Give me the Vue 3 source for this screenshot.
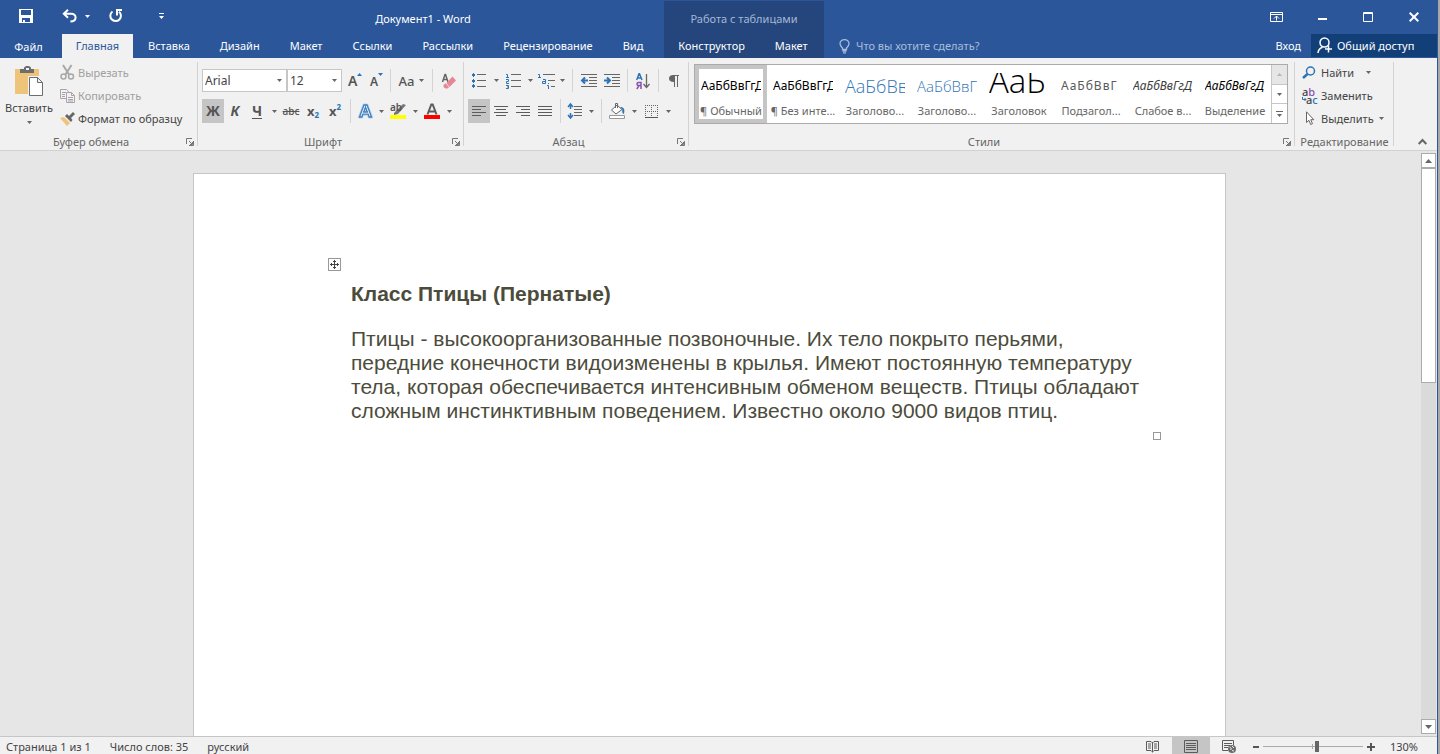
<script setup>
import { ref } from 'vue'

const tabs = ['Вставка', 'Дизайн', 'Макет', 'Ссылки', 'Рассылки', 'Рецензирование', 'Вид']
const tableTabs = ['Конструктор', 'Макет']
const styles = [
  { name: '¶ Обычный', kind: 'normal', sample: 'АаБбВвГгД' },
  { name: '¶ Без инте...', kind: 'normal', sample: 'АаБбВвГгД' },
  { name: 'Заголово...', kind: 'h1', sample: 'АаБбВв' },
  { name: 'Заголово...', kind: 'h2', sample: 'АаБбВвГ' },
  { name: 'Заголовок', kind: 'title', sample: 'АаБ' },
  { name: 'Подзагол...', kind: 'subtitle', sample: 'АаБбВвГ' },
  { name: 'Слабое в...', kind: 'subtle', sample: 'АаБбВвГгД' },
  { name: 'Выделение', kind: 'emphasis', sample: 'АаБбВвГгД' },
]
const activeStyle = ref(0)
const font = ref('Arial')
const size = ref('12')
const query = ref('')
const zoom = ref(54)
</script>

<template>
  <div class="shell">
    <header class="header">
      <div class="title-left">
        <div class="quick">
          <button class="q save" aria-label="Сохранить">
            <svg width="14" height="14" viewBox="0 0 14 14"><path fill="#fff" fill-rule="evenodd" d="M0 0h14v14H0zM2 1v5h10V1zM3 9v4h1v-2h2v2h5V9z" /></svg>
          </button>
          <button class="q undo" aria-label="Отменить">
            <svg width="15" height="14" viewBox="0 0 15 14" fill="none" stroke="#fff" stroke-width="2"><path d="M6 .8 1.800 4.800 6 8.800M2 4.800h7.200c6 0 6 7.600-.8 7.700" /></svg>
          </button>
          <button class="q more" aria-label="Список отмены"><svg width="5" height="3"><path fill="#fff" d="M0 0h5L2.500 3z" /></svg></button>
          <button class="q redo" aria-label="Повторить">
            <svg width="14" height="14" viewBox="0 0 14 14" fill="none" stroke="#fff" stroke-width="2"><path d="M3.500 2.500a5.300 5.300 0 1 0 6.500.2M8 6.500V1h5" /></svg>
          </button>
          <button class="q custom" aria-label="Настройка панели"><svg width="5" height="7"><path fill="#fff" d="M0 0h5v1H0zM0 3h5L2.500 6z" /></svg></button>
        </div>
        <div class="doc-title">Документ1 - Word</div>
      </div>
      <div class="context-title">Работа с таблицами</div>
      <div class="win-controls">
        <button aria-label="Параметры ленты"><svg width="13" height="10" fill="none" stroke="#fff"><path d="M.5.5h12v9H.5zM.5 2.500h12M6.500 8.500V4M4 6.500 6.500 4 9 6.500" /></svg></button>
        <button aria-label="Свернуть"><svg width="9" height="10"><path fill="#fff" d="M0 6h9v2H0z" /></svg></button>
        <button aria-label="Развернуть"><svg width="10" height="10"><path fill="none" stroke="#fff" d="M.5.5h9v9h-9zM0 1.500h10" /></svg></button>
        <button aria-label="Закрыть"><svg width="10" height="10"><path fill="none" stroke="#fff" stroke-width="2" d="m.7.7 8.600 8.600M9.300.7.7 9.300" /></svg></button>
      </div>
      <nav class="tabs">
        <button class="tab file">Файл</button>
        <button class="tab active">Главная</button>
        <button v-for="t in tabs" :key="t" class="tab">{{ t }}</button>
      </nav>
      <nav class="context-tabs">
        <button v-for="t in tableTabs" :key="t" class="tab">{{ t }}</button>
      </nav>
      <div class="tab-right">
        <label class="tell">
          <svg width="11" height="15" viewBox="0 0 11 15" fill="none" stroke="#a9bcd9"><path stroke-width="1.300" d="M3.500 10.500V9C2.300 7.800 1 6.700 1 4.800a4.500 4.200 0 0 1 9 0C10 6.700 8.700 7.800 7.500 9v1.500zM3.500 12h4M4 13.800h3" /></svg>
          <input v-model="query" type="text" aria-label="Помощник" placeholder="Что вы хотите сделать?">
        </label>
        <button class="signin">Вход</button>
        <button class="share">
          <svg width="16" height="17" viewBox="0 0 16 17" fill="none" stroke="#fff" stroke-width="1.500"><circle cx="7.500" cy="5.500" r="4.500" /><path d="M1 16c.2-3.200 1.800-4.800 4.500-5.700M11.500 8.500v7M8 12h7" /></svg>
          Общий доступ
        </button>
      </div>
    </header>

    <section class="ribbon">
      <div class="group clipboard">
        <div class="body clip-body">
          <button class="paste">
            <svg width="29" height="31" viewBox="0 0 29 31"><path fill="#eec47a" d="M0 3h24v25H0z" /><path fill="#6d6d6d" d="M5 3h4V1.500L11 0h3l2 1.500V3h3v4H5z" /><path fill="#f1f1f1" d="M11 2h3v2h-3zM13 10h11l5 5v16H13z" /><path fill="#fff" stroke="#6d6d6d" d="M14.500 11.500h8l5 5v13h-13zM22.500 11.500v5h5" /></svg>
            <span>Вставить</span>
            <svg class="caret" width="5" height="3"><path d="M0 0h5L2.500 3z" /></svg>
          </button>
          <div class="rows">
            <button class="row off">
              <svg width="15" height="15" viewBox="0 0 15 15" fill="none" stroke="#a8a8a8"><path stroke-width="2" d="M3 0l6 9.500M11.500 0l-6 9.500" /><circle cx="3.500" cy="11.500" r="2.500" stroke-width="1.500" /><circle cx="11" cy="11.500" r="2.500" stroke-width="1.500" /></svg>
              Вырезать
            </button>
            <button class="row off">
              <svg width="15" height="14" viewBox="0 0 15 14" fill="#f1f1f1" stroke="#aaa3ab"><path d="M.5.5h6l2 2v7h-8zM2 3.500h4M2 5.500h3M2 7.500h3" /><path d="M6.500 3.500h5l3 3v7h-8zM11.500 3.500v3h3M8 8.500h5M8 10.500h5M8 12h5" /></svg>
              Копировать
            </button>
            <button class="row">
              <svg width="15" height="14" viewBox="0 0 15 14"><path fill="#eec47a" d="m0 6 4-1 6 6-3 3z" /><path fill="#666" d="m5 4 2-2 2 2 4-4 2 2-4 4 1.500 2L11 10z" /></svg>
              Формат по образцу
            </button>
          </div>
        </div>
        <footer>Буфер обмена<button class="launch" aria-label="Буфер обмена: параметры"><svg width="8" height="8"><path fill="none" stroke="#777" d="M.5 6V.5H6M3 3l3 3M7.500 3v4.500H3M6.500 4v2.500H4" /></svg></button></footer>
      </div>

      <div class="group fonts">
        <div class="body">
          <div class="tools top">
            <label class="combo face"><select v-model="font" aria-label="Шрифт"><option>Arial</option></select><svg class="caret" width="5" height="3"><path d="M0 0h5L2.500 3z" /></svg></label>
            <label class="combo size"><select v-model="size" aria-label="Размер"><option>12</option></select><svg class="caret" width="5" height="3"><path d="M0 0h5L2.500 3z" /></svg></label>
            <button class="t grow" aria-label="Увеличить"><span>А</span><svg class="up" width="5" height="3"><path fill="#2e74b5" d="M0 3h5L2.500 0z" /></svg></button>
            <button class="t shrink" aria-label="Уменьшить"><span>А</span><svg class="up" width="5" height="3"><path fill="#2e74b5" d="M0 0h5L2.500 3z" /></svg></button>
            <i class="sep" />
            <button class="t case" aria-label="Регистр"><span>Aa</span><svg class="caret" width="5" height="3"><path d="M0 0h5L2.500 3z" /></svg></button>
            <i class="sep" />
            <button class="t" aria-label="Удалить форматирование"><svg width="15" height="16" viewBox="0 0 15 16"><path fill="none" stroke="#666" stroke-width="1.500" d="M1.500 9 4 1.500h.5L7 9M2.500 6.500h4" /><path fill="#e88596" d="m5.500 10 6-6.500L15 7.500 8.500 14z" /><path fill="#e88596" d="m2.500 12 2.200-1.800 3.300 4-1.500 1.300h-2L2.500 14z" /></svg></button>
          </div>
          <div class="tools">
            <button class="t on heavy">Ж</button>
            <button class="t heavy ital">К</button>
            <button class="t heavy under">Ч</button>
            <button class="drop" aria-label="Подчеркивание"><svg class="caret" width="5" height="3"><path d="M0 0h5L2.500 3z" /></svg></button>
            <button class="t strike">abc</button>
            <button class="t idx">x<sub>2</sub></button>
            <button class="t idx">x<sup>2</sup></button>
            <i class="sep" />
            <button class="t narrow" aria-label="Эффекты"><svg width="15" height="16" viewBox="0 0 15 16"><path fill="#b9d3ec" stroke="#b9d3ec" stroke-width="3" stroke-linejoin="round" d="M1.500 14 6 2h3l4.500 12h-2.300l-1-2.800H4.800l-1 2.800z" /><path fill="#fff" stroke="#3f7fbd" stroke-width="1.300" d="M1.500 14 6 2h3l4.500 12h-2.300l-1-2.800H4.800l-1 2.800zM5.600 9h3.800L7.500 4z" /></svg></button>
            <button class="drop" aria-label="Список эффектов"><svg class="caret" width="5" height="3"><path d="M0 0h5L2.500 3z" /></svg></button>
            <button class="t mark" aria-label="Цвет выделения"><span>ab</span><svg width="16" height="16" viewBox="0 0 16 16"><path fill="#777" d="m4 10 9-9 3 1-8 9-4 1z" /><path fill="#ff0" d="M0 12h16v4H0z" /></svg></button>
            <button class="drop" aria-label="Список выделения"><svg class="caret" width="5" height="3"><path d="M0 0h5L2.500 3z" /></svg></button>
            <button class="t" aria-label="Цвет текста"><svg width="16" height="16" viewBox="0 0 16 16"><path fill="none" stroke="#5c5c5c" stroke-width="2" d="M3.500 11.500 7.300 1.500h1.400l3.800 10M5 8.500h6" /><path fill="#f00" d="M0 12h16v4H0z" /></svg></button>
            <button class="drop" aria-label="Список цветов"><svg class="caret" width="5" height="3"><path d="M0 0h5L2.500 3z" /></svg></button>
          </div>
        </div>
        <footer>Шрифт<button class="launch" aria-label="Шрифт: параметры"><svg width="8" height="8"><path fill="none" stroke="#777" d="M.5 6V.5H6M3 3l3 3M7.500 3v4.500H3M6.500 4v2.500H4" /></svg></button></footer>
      </div>

      <div class="group para">
        <div class="body">
          <div class="tools top">
            <button class="t" aria-label="Маркеры"><svg width="14" height="15" viewBox="0 0 14 15"><path fill="#2e74b5" d="M0 1h3v2H0zM1 0h1v4H1zM0 7h3v2H0zM1 6h1v4H1zM0 12h3v2H0zM1 11h1v4H1z" /><path fill="#666" d="M5 1h9v1H5zM5 7h9v1H5zM5 13h9v1H5z" /></svg></button>
            <button class="drop" aria-label="Список маркеров"><svg class="caret" width="5" height="3"><path d="M0 0h5L2.500 3z" /></svg></button>
            <button class="t" aria-label="Нумерация"><svg width="15" height="16" viewBox="0 0 15 16"><path fill="none" stroke="#2e74b5" d="M0 1.500h1.500V4M0 4.500h3M0 6.500h2.500v2h-2v2H3M0 12.500h2.500v3H0M1 14h1" /><path fill="#666" d="M5 1h10v1H5zM5 7h10v1H5zM5 13h10v1H5z" /></svg></button>
            <button class="drop" aria-label="Список нумерации"><svg class="caret" width="5" height="3"><path d="M0 0h5L2.500 3z" /></svg></button>
            <button class="t narrow" aria-label="Многоуровневый список"><svg width="17" height="16" viewBox="0 0 17 16"><path fill="none" stroke="#2e74b5" d="M0 1.500h1.500V4M0 4.500h3M5 6.500h2.500v4h-3v-2h3M10.500 10v1M9 12.500h1.500V16" /><path fill="#666" d="M5 1h12v1H5zM10 7h7v1h-7zM13 13h4v1h-4z" /></svg></button>
            <button class="drop" aria-label="Список уровней"><svg class="caret" width="5" height="3"><path d="M0 0h5L2.500 3z" /></svg></button>
            <i class="sep" />
            <button class="t wide" aria-label="Уменьшить отступ"><svg width="16" height="13" viewBox="0 0 16 13"><path fill="#666" d="M0 0h16v1H0zM8 3h8v1H8zM8 6h8v1H8zM8 9h8v1H8zM0 12h16v1H0z" /><path fill="none" stroke="#2e74b5" stroke-width="2" d="M7 6.500H1M4 3.500l-3 3 3 3" /></svg></button>
            <button class="t" aria-label="Увеличить отступ"><svg width="16" height="13" viewBox="0 0 16 13"><path fill="#666" d="M0 0h16v1H0zM8 3h8v1H8zM8 6h8v1H8zM8 9h8v1H8zM0 12h16v1H0z" /><path fill="none" stroke="#2e74b5" stroke-width="2" d="M0 6.500h6M3 3.500l3 3-3 3" /></svg></button>
            <i class="sep" />
            <button class="t" aria-label="Сортировка"><svg width="14" height="16" viewBox="0 0 14 16" fill="none"><path stroke="#2e74b5" stroke-width="1.500" d="M.7 7 3 .8h.5L6 7M1.500 5h4" /><path stroke="#8a4fb0" stroke-width="1.500" d="M5 16V9.500H2.500c-2 0-2 3 0 3H5M3 12.500.8 16" /><path stroke="#666" stroke-width="1.300" d="M10.500 1v13M7.500 11l3 3.500 3-3.500" /></svg></button>
            <i class="sep" />
            <button class="t" aria-label="Знаки"><svg width="10" height="12" viewBox="0 0 10 12"><path fill="#666" d="M10 0v1H9v11H8V1H6v11H5V7C1.500 7 0 5.500 0 3.500S1.500 0 4 0z" /></svg></button>
          </div>
          <div class="tools">
            <button class="t on" aria-label="По левому краю"><svg width="14" height="10"><path fill="#5c5c5c" d="M0 0h14v1H0zM0 3h9v1H0zM0 6h14v1H0zM0 9h9v1H0z" /></svg></button>
            <button class="t" aria-label="По центру"><svg width="14" height="10"><path fill="#5c5c5c" d="M0 0h14v1H0zM2 3h10v1H2zM0 6h14v1H0zM2 9h10v1H2z" /></svg></button>
            <button class="t" aria-label="По правому краю"><svg width="14" height="10"><path fill="#5c5c5c" d="M0 0h14v1H0zM5 3h9v1H5zM0 6h14v1H0zM5 9h9v1H5z" /></svg></button>
            <button class="t" aria-label="По ширине"><svg width="14" height="10"><path fill="#5c5c5c" d="M0 0h14v1H0zM0 3h14v1H0zM0 6h14v1H0zM0 9h14v1H0z" /></svg></button>
            <i class="sep" />
            <button class="t narrow" aria-label="Интервал"><svg width="14" height="16" viewBox="0 0 14 16"><path fill="#666" d="M6 3h8v1H6zM6 6h8v1H6zM6 9h8v1H6zM6 12h8v1H6z" /><path fill="none" stroke="#2e74b5" stroke-width="1.500" d="M2.500 1v5M2.500 10v5M0 4l2.500-3L5 4M0 12l2.500 3L5 12" /></svg></button>
            <button class="drop" aria-label="Список интервалов"><svg class="caret" width="5" height="3"><path d="M0 0h5L2.500 3z" /></svg></button>
            <i class="sep" />
            <button class="t" aria-label="Заливка"><svg width="16" height="16" viewBox="0 0 16 16"><path fill="#fff" stroke="#666" d="m2.500 7 5.500-5 5 4.500-6 4.500zM6.500 5V.5h2V5" /><path fill="#2e74b5" d="M11 4c4 0 5 2 4 7-3-1-1-4-2-5z" /><path fill="#fff" stroke="#999" d="M.5 12.500h15v3H.5z" /></svg></button>
            <button class="drop" aria-label="Список заливок"><svg class="caret" width="5" height="3"><path d="M0 0h5L2.500 3z" /></svg></button>
            <button class="t" aria-label="Границы"><svg width="13" height="13"><path fill="none" stroke="#666" stroke-dasharray="1 1" d="M.5 0v12M6.500 0v12M12.500 0v12M0 .5h13M0 6.500h13" /><path fill="#555" d="M0 12h13v1H0z" /></svg></button>
            <button class="drop" aria-label="Список границ"><svg class="caret" width="5" height="3"><path d="M0 0h5L2.500 3z" /></svg></button>
          </div>
        </div>
        <footer>Абзац<button class="launch" aria-label="Абзац: параметры"><svg width="8" height="8"><path fill="none" stroke="#777" d="M.5 6V.5H6M3 3l3 3M7.500 3v4.500H3M6.500 4v2.500H4" /></svg></button></footer>
      </div>

      <div class="group style-group">
        <div class="body">
          <div class="gallery">
            <button v-for="(s, i) in styles" :key="i" class="style" :class="{ chosen: i === activeStyle }" @click="activeStyle = i">
              <span class="sample" :class="s.kind">{{ s.sample }}</span>
              <span class="name">{{ s.name }}</span>
            </button>
            <div class="scroll">
              <button class="dim" aria-label="Выше"><svg width="5" height="3"><path fill="#b5b5b5" d="M0 3h5L2.500 0z" /></svg></button>
              <button aria-label="Ниже"><svg width="5" height="3"><path fill="#666" d="M0 0h5L2.500 3z" /></svg></button>
              <button aria-label="Все стили"><svg width="7" height="6"><path fill="#666" d="M0 0h7v1H0zM1 3h5L3.500 6z" /></svg></button>
            </div>
          </div>
        </div>
        <footer>Стили<button class="launch" aria-label="Стили: параметры"><svg width="8" height="8"><path fill="none" stroke="#777" d="M.5 6V.5H6M3 3l3 3M7.500 3v4.500H3M6.500 4v2.500H4" /></svg></button></footer>
      </div>

      <div class="group editing">
        <div class="body">
          <div class="rows">
            <button class="row"><svg width="15" height="14" viewBox="0 0 15 14" fill="none" stroke="#2e74b5"><circle cx="8.500" cy="5" r="4" stroke-width="1.500" /><path stroke-width="2.500" d="M5.500 8 1 12" /></svg>Найти<svg class="caret far" width="5" height="3"><path d="M0 0h5L2.500 3z" /></svg></button>
            <button class="row"><span class="swap"><span class="ab">a<b>b</b></span><span class="ac"><svg width="4" height="5"><path fill="none" stroke="#2e74b5" d="M.5 0v2.500H4M2.500 1l1.500 1.500L2.500 4" /></svg>a<b>c</b></span></span>Заменить</button>
            <button class="row"><svg width="15" height="15" viewBox="0 0 15 15"><path fill="#fff" stroke="#666" d="M4.500.8v10.700l2.400-2.200 1.800 4.200 1.800-.8-1.800-4h3.100z" /></svg>Выделить<svg class="caret near" width="5" height="3"><path d="M0 0h5L2.500 3z" /></svg></button>
          </div>
        </div>
        <footer>Редактирование</footer>
      </div>
      <button class="collapse" aria-label="Свернуть ленту"><svg width="9" height="6"><path fill="none" stroke="#666" stroke-width="2" d="m.7 5 3.800-4 3.800 4" /></svg></button>
    </section>

    <div class="workspace">
      <main class="canvas">
        <article class="page">
          <div class="table-cell">
            <button class="move" aria-label="Переместить таблицу"><svg width="9" height="9"><path fill="#444" d="M4 0h1v9H4zM0 4h9v1H0zM3 1h3v1H3zM3 7h3v1H3zM1 3h1v3H1zM7 3h1v3H7z" /></svg></button>
            <h1>Класс Птицы (Пернатые)</h1>
            <p>Птицы - высокоорганизованные позвоночные. Их тело покрыто перьями, передние конечности видоизменены в крылья. Имеют постоянную температуру тела, которая обеспечивается интенсивным обменом веществ. Птицы обладают сложным инстинктивным поведением. Известно около 9000 видов птиц.</p>
            <i class="resize" />
          </div>
        </article>
      </main>
      <div class="scrollbar">
        <button aria-label="Прокрутить вверх"><svg width="7" height="4"><path fill="#666" d="M0 4h7L3.500 0z" /></svg></button>
        <div class="track"><div class="thumb" /></div>
        <button aria-label="Прокрутить вниз"><svg width="7" height="4"><path fill="#666" d="M0 0h7L3.500 4z" /></svg></button>
      </div>
    </div>

    <footer class="status">
      <span>Страница 1 из 1</span>
      <span>Число слов: 35</span>
      <span>русский</span>
      <div class="views">
        <button aria-label="Режим чтения"><svg width="13" height="13" viewBox="0 0 13 13" fill="none" stroke="#5c5c5c"><path d="M6.500 2v10.500M.5 1.500H5L6.500 3 8 1.500h4.500v9H8L6.500 12 5 10.500H.5zM2 4h3M2 6h3M2 8h3M8 4h3M8 6h3M8 8h3" /></svg></button>
        <button class="on" aria-label="Разметка страницы"><svg width="14" height="13"><path fill="none" stroke="#5c5c5c" d="M.5.5h13v12H.5zM2 3.500h10M2 5.500h10M2 7.500h10M2 9.500h10" /></svg></button>
        <button aria-label="Веб-документ"><svg width="14" height="13"><path fill="none" stroke="#5c5c5c" d="M6 10.500H.5V.5h11V5M2 3.500h8M2 5.500h6M2 7.500h4" /><circle cx="10" cy="9" r="4" fill="#6b6b6b" /><path fill="none" stroke="#eee" d="m7.500 7 2 1.500-1 1.500M10 6l2 2M10 10.500l2 .5" /></svg></button>
      </div>
      <button class="zoom-btn" aria-label="Уменьшить масштаб"><svg width="6" height="9"><path fill="#555" d="M0 4h6v2H0z" /></svg></button>
      <input v-model="zoom" class="slider" type="range" min="0" max="100" aria-label="Масштаб">
      <button class="zoom-btn" aria-label="Увеличить масштаб"><svg width="8" height="9"><path fill="#555" d="M0 4h8v2H0zM3 1h2v8H3z" /></svg></button>
      <button class="percent">130%</button>
    </footer>
  </div>
</template>

<style>
html, body { margin: 0; background: #a9a9a9; }
</style>

<style scoped>
.shell {
  display: flex;
  flex-direction: column;
  height: 100vh;
  margin-right: 2px;
  box-sizing: border-box;
  border-right: 1px solid #2b579a;
  overflow: hidden;
  background: #f1f1f1;
  color: #444;
  font: 11px/16px "Noto Sans", "Open Sans", sans-serif;
}
.shell * { box-sizing: border-box; }
button, input, select {
  margin: 0;
  padding: 0;
  border: 0;
  background: none;
  color: inherit;
  font: inherit;
  border-radius: 0;
  white-space: nowrap;
}
svg { flex: none; display: block; overflow: visible; }
.caret path { fill: #666; }

.header {
  display: grid;
  grid-template-columns: 664px 160px 1fr;
  grid-template-rows: 34px 24px;
  background: #2b579a;
  color: #fff;
}
.title-left { display: flex; align-items: center; }
.quick { display: flex; align-items: center; width: 182px; padding: 0 0 2px 19px; }
.q { display: flex; align-items: center; justify-content: flex-start; height: 24px; }
.save { width: 43px; }
.undo { width: 23px; }
.more { width: 24px; }
.redo { width: 50px; }
.custom { width: 10px; }
.doc-title { flex: 1; text-align: center; padding-top: 4px; }
.context-title {
  margin-top: 1px;
  padding-top: 10px;
  background: #24467c;
  color: #a6b8d6;
  text-align: center;
}
.win-controls { display: flex; justify-content: flex-end; align-items: center; }
.win-controls button { display: flex; align-items: center; justify-content: center; width: 46px; height: 32px; }
.tabs, .context-tabs { display: flex; }
.tab { height: 24px; padding: 0 14px; margin-right: 2px; flex: none; }
.tab.file { width: 57px; padding: 2px 0 0; margin-right: 5px; }
.tab.active { width: 71px; margin-right: 1px; background: #f1f1f1; color: #2b579a; padding: 0; }
.context-tabs { background: #24467c; justify-content: center; }
.tab-right { display: flex; align-items: stretch; }
.tell { display: flex; align-items: center; flex: 1; gap: 6px; padding-left: 15px; }
.tell input { flex: 1; min-width: 0; outline: 0; }
.tell input::placeholder { color: #a9bcd9; opacity: 1; }
.signin { padding: 0 10px; }
.share { display: flex; align-items: center; gap: 4px; width: 126px; height: 23px; padding-left: 6px; background: #123f78; }

.ribbon { display: flex; height: 93px; border-bottom: 1px solid #d2d2d2; background: #f1f1f1; }
.group { position: relative; display: flex; flex-direction: column; padding: 0 4px; }
.group::after { content: ""; position: absolute; right: 0; top: 4px; bottom: 4px; width: 1px; background: #d2d2d2; }
.body { flex: 1; }
.group footer { height: 16px; padding-right: 16px; text-align: center; color: #666; }
.launch { position: absolute; right: 4px; bottom: 4px; }
.clipboard { width: 198px; }
.fonts { width: 266px; }
.para { width: 225px; }
.style-group { width: 606px; flex: 0 1 auto; }
.editing { width: 99px; }
.group.editing footer { padding: 0; }
.clip-body { display: flex; gap: 6px; }
.paste { display: flex; flex-direction: column; align-items: center; width: 50px; padding-top: 8px; color: #444; }
.paste span { margin: 3px 0 5px; }
.rows { padding-top: 3px; }
.row { display: flex; align-items: center; height: 23px; gap: 3px; color: #444; }
.off { color: #a0a0a0; }
.far { margin-left: 8px; }
.near { margin-left: 1px; }
.editing .body { padding-left: 3px; }
.editing .row { gap: 4px; }
.swap { width: 15px; line-height: 8px; font-weight: 500; text-align: left; }
.swap span { display: flex; align-items: center; }
.swap b { font-weight: 500; }
.ab b { color: #8a4fb0; }
.ac b { color: #2e74b5; }

.tools { display: flex; height: 24px; margin-top: 7px; }
.tools.top { height: 23px; margin-top: 11px; }
.t { display: flex; align-items: center; justify-content: center; width: 22px; flex: none; color: #555; }
.narrow { width: 20px; }
.wide { width: 24px; }
.drop { display: flex; align-items: center; justify-content: center; width: 12px; flex: none; }
.on { background: #c5c5c5; }
.sep { width: 1px; margin: 0 4px; background: #d4d4d4; flex: none; }
.combo { position: relative; display: flex; align-items: center; background: #fff; border: 1px solid #c6c6c6; }
.combo select { width: 100%; height: 21px; padding: 0 2px; appearance: none; outline: 0; font-size: 12px; }
.combo .caret { position: absolute; right: 4px; }
.face { width: 85px; }
.size { width: 55px; }
.grow, .shrink { justify-content: flex-start; padding-left: 6px; font-weight: 600; }
.grow { font-size: 14px; }
.shrink { font-size: 12px; }
.shrink span { padding-top: 3px; }
.up { align-self: flex-start; margin-top: 4px; }
.case { width: 33px; gap: 5px; font-size: 13px; font-weight: 500; }
.heavy { font-weight: 700; font-size: 14px; }
.ital { font-style: italic; }
.under { text-decoration: underline; text-underline-offset: 2px; }
.strike { text-decoration: line-through; font-weight: 500; font-size: 10px; }
.idx { font-weight: 700; font-size: 13px; }
.idx sub, .idx sup { font-size: 8px; line-height: 8px; color: #2e74b5; }
.idx sub { align-self: flex-end; padding-bottom: 4px; }
.idx sup { align-self: flex-start; padding-top: 4px; }
.mark { position: relative; }
.mark span { position: absolute; left: 3px; top: 0; line-height: 16px; font-size: 10px; font-weight: 600; }

.style-group .body { padding: 6px 3px 0 1px; }
.gallery { display: flex; height: 60px; border: 1px solid #ababab; background: #fff; }
.style { display: flex; flex-direction: column; align-items: center; width: 72px; flex: none; padding: 4px 0 0; border: 4px solid transparent; }
.chosen { border-color: #c5c5c5; }
.sample { width: 60px; height: 26px; line-height: 26px; flex: none; overflow: hidden; text-align: left; font-size: 12px; color: #000; }
.name { margin-top: 4px; color: #666; line-height: 16px; }
.sample.h1 { font-family: "Open Sans", sans-serif; font-weight: 300; font-size: 18px; color: #2e74b5; }
.sample.h2 { font-family: "Open Sans", sans-serif; font-weight: 300; font-size: 15px; color: #2e74b5; }
.sample.title { font-family: "Open Sans", sans-serif; font-weight: 300; font-size: 33px; line-height: 16px; }
.sample.subtitle { color: #5a5a5a; letter-spacing: 1px; }
.sample.subtle { color: #404040; font-style: italic; }
.sample.emphasis { font-style: italic; }
.scroll { display: flex; flex-direction: column; flex: 1; border-left: 1px solid #c6c6c6; }
.scroll button { display: flex; flex: 1; align-items: center; justify-content: center; border-bottom: 1px solid #c6c6c6; }
.scroll button:last-child { border-bottom: 0; }
.dim { background: #e6e6e6; }
.collapse { align-self: flex-end; margin: 0 10px 5px auto; }

.workspace { display: flex; flex: 1; min-height: 0; background: #e6e6e6; }
.canvas { flex: 1; padding: 22px 1px 0 0; overflow: hidden; }
.page { width: 1033px; max-width: 100%; height: 100%; margin: 0 auto; padding: 108px 76px 0 157px; background: #fff; border: 1px solid #c6c6c6; border-bottom: 0; }
.table-cell { position: relative; color: #4c4c3c; font-family: "Liberation Sans", Arial, sans-serif; font-size: 21px; line-height: 24px; }
.table-cell h1 { margin: 0 0 21px; font-size: 21px; line-height: 24px; }
.table-cell p { margin: 0; }
.move { position: absolute; left: -23px; top: -24px; width: 13px; height: 13px; border: 1px solid #999; background: #fff; display: flex; align-items: center; justify-content: center; }
.resize { position: absolute; right: -12px; bottom: -17px; width: 8px; height: 8px; border: 1px solid #999; }
.scrollbar { display: flex; flex-direction: column; width: 17px; padding: 2px 1px; }
.scrollbar button { display: flex; align-items: center; justify-content: center; height: 15px; background: #fff; border: 1px solid #ababab; }
.track { flex: 1; background: #dadada; }
.thumb { height: 39%; background: #fff; border: 1px solid #ababab; }

.status { display: flex; align-items: flex-start; height: 18px; flex: none; gap: 19px; padding: 2px 19px 0 6px; border-top: 1px solid #c6c6c6; overflow: hidden; }
.views { display: flex; margin: -2px 1px 0 auto; }
.views button { display: flex; justify-content: center; width: 38px; height: 20px; padding-top: 3px; }
.zoom-btn { margin-left: -15px; padding-top: 3px; }
.slider { width: 100px; height: 11px; margin: 2px 0 0 -15px; appearance: none; background: linear-gradient(#aaa, #aaa) 0 5px / 100% 1px no-repeat, linear-gradient(#aaa, #aaa) 50% 3px / 1px 5px no-repeat; }
.slider::-webkit-slider-thumb { appearance: none; width: 4px; height: 11px; background: #666; border-radius: 0; }
.percent { margin-left: -4px; }
</style>
